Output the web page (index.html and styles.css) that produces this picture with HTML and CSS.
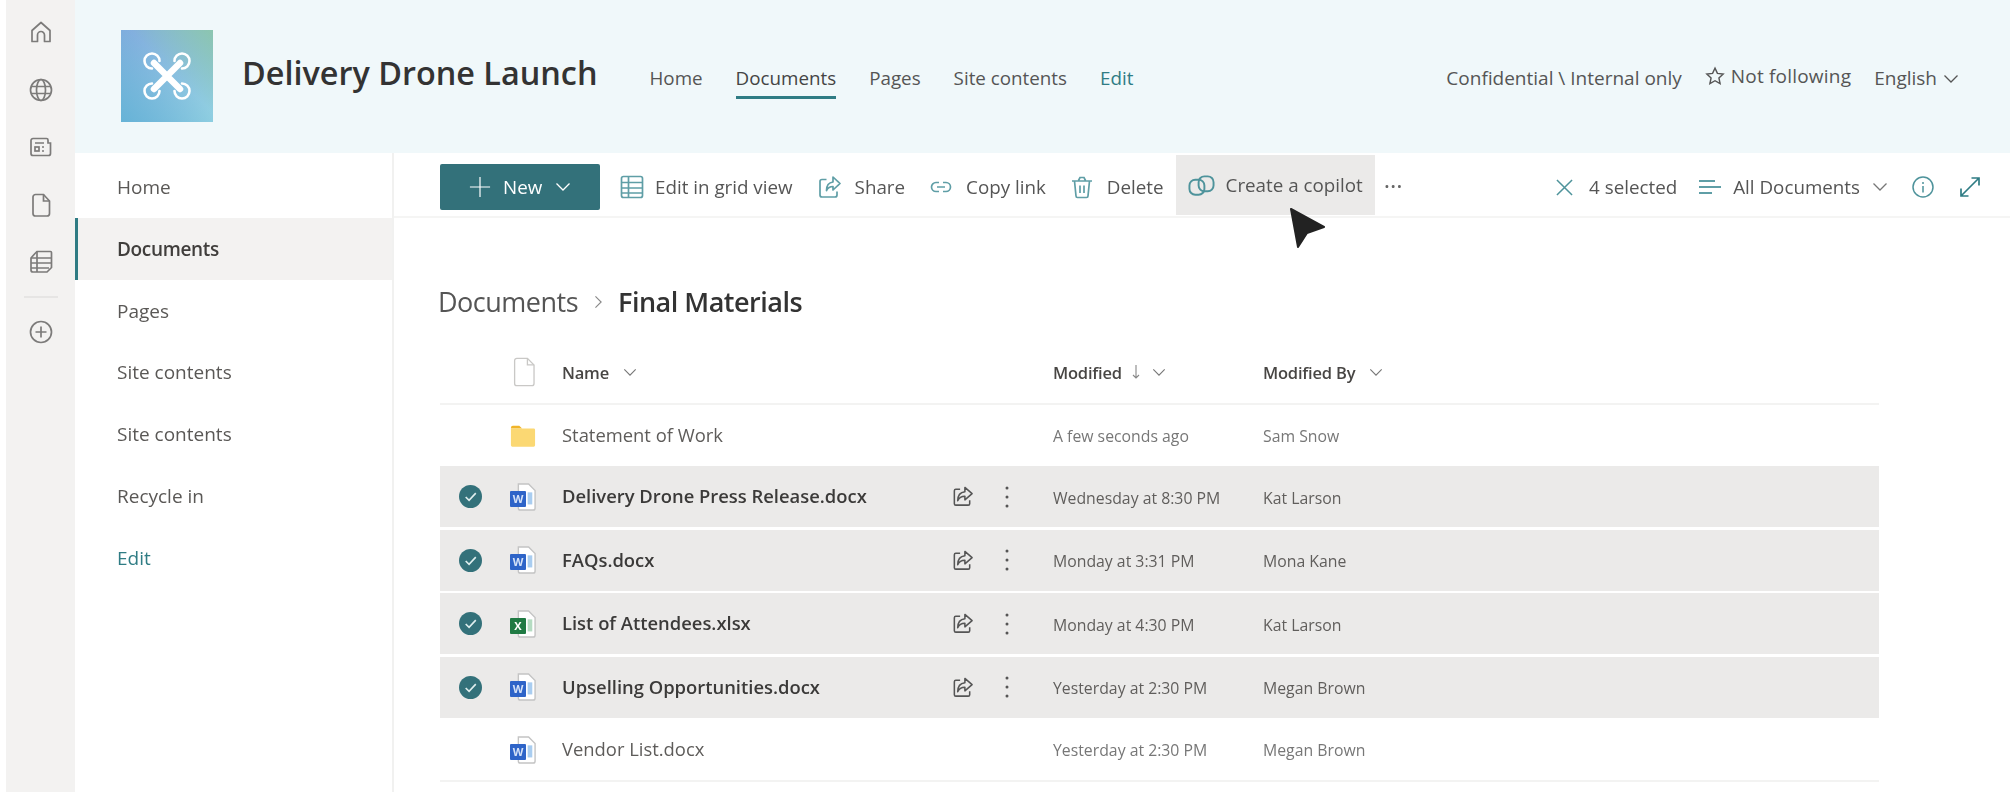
FILE: index.html
```html
<!DOCTYPE html>
<html lang="en">
<head>
<meta charset="utf-8">
<title>Delivery Drone Launch</title>
<link rel="stylesheet" href="styles.css">
</head>
<body>
<svg class="sprite" width="0" height="0" aria-hidden="true">
  <symbol id="chev" viewBox="0 0 16 10"><path d="M1.500 1.500 8 8l6.500-6.500" fill="none" stroke="currentColor" stroke-width="1.300"/></symbol>
  <symbol id="share" viewBox="0 0 24 24"><path d="M9.500 4.500H5a1.500 1.500 0 0 0-1.500 1.500v13.500A1.500 1.500 0 0 0 5 21h13a1.500 1.500 0 0 0 1.500-1.500V16" fill="none" stroke="currentColor" stroke-width="1.600"/><path d="M14.500 2.500 22 9l-7.500 6.500v-3.700c-3.500 0-6 1.200-7.500 4.700 0-5.500 2.500-9 7.500-9.500z" fill="none" stroke="currentColor" stroke-width="1.600" stroke-linejoin="round"/></symbol>
  <symbol id="kebab" viewBox="0 0 6 24"><circle cx="3" cy="3" r="1.500" fill="currentColor"/><circle cx="3" cy="12" r="1.500" fill="currentColor"/><circle cx="3" cy="21" r="1.500" fill="currentColor"/></symbol>
  <symbol id="check" viewBox="0 0 24 24"><circle cx="12" cy="12" r="12" fill="#33717a"/><path d="M7 12.500l3.500 3.500L17.500 8.500" fill="none" stroke="#dfeeee" stroke-width="1.700"/></symbol>
  <symbol id="doc" viewBox="0 0 28 34"><path d="M7 1.500h12l7.500 7.500v21a2.500 2.500 0 0 1-2.500 2.500H7A2.500 2.500 0 0 1 4.500 30V4A2.500 2.500 0 0 1 7 1.500z" fill="#fff" stroke="#c9c8c6" stroke-width="1.500"/><path d="M19 1.500V9h7.500" fill="none" stroke="#c9c8c6" stroke-width="1.500"/></symbol>
  <symbol id="page-w" viewBox="0 0 28 30"><path d="M9 1h11l7 7v19a2 2 0 0 1-2 2H11a2 2 0 0 1-2-2z" fill="#fff" stroke="#c4c4c4" stroke-width="1.500"/><rect x="19" y="10" width="5" height="13" fill="#a9cdf0"/></symbol>
  <symbol id="page-x" viewBox="0 0 28 30"><path d="M9 1h11l7 7v19a2 2 0 0 1-2 2H11a2 2 0 0 1-2-2z" fill="#fff" stroke="#c4c4c4" stroke-width="1.500"/><rect x="19" y="10" width="5" height="13" fill="#b5dcc2"/></symbol>
</svg>

<div class="app">
  <aside class="rail">
    <svg class="rail-icon" viewBox="0 0 24 24"><path d="M3 21.500V10.500L12 2.500l9 8v11h-5.500v-6.500a3.500 3.500 0 0 0-7 0v6.500z" stroke-linejoin="round"/></svg>
    <svg class="rail-icon" viewBox="0 0 24 24"><circle cx="12" cy="12" r="10.500"/><ellipse cx="12" cy="12" rx="4.500" ry="10.500"/><path d="M2 8.500h20M2 15.500h20"/></svg>
    <svg class="rail-icon" viewBox="0 0 24 24"><path d="M4 3.500h13.500c1 0 1.500.5 1.500 1.500v3h2.500v10.500a2 2 0 0 1-2 2H4a2 2 0 0 1-2-2V5.500a2 2 0 0 1 2-2z"/><path d="M6 8h9M13 12h2M13 16h2"/><rect x="6" y="12" width="4" height="4"/></svg>
    <svg class="rail-icon" viewBox="0 0 24 24"><path d="M6.500 1.500h8l6 6.500v12.500a2.500 2.500 0 0 1-2.500 2.500H6.500A2.500 2.500 0 0 1 4 20.500v-16.500a2.500 2.500 0 0 1 2.500-2.500z"/><path d="M14.500 1.500V8h6"/></svg>
    <svg class="rail-icon" viewBox="0 0 24 24"><path d="M6 3.500 8 1.500h13.500a1 1 0 0 1 1 1v15L18 22H4a2 2 0 0 1-2-2V8z"/><path d="M2 8h20M2 13h20M2 18h18M8 8v14M8 1.500V8"/></svg>
    <div class="rail-sep"></div>
    <svg class="rail-icon" viewBox="0 0 24 24"><circle cx="12" cy="12" r="10.500"/><path d="M12 6.500v11M6.500 12h11"/></svg>
  </aside>

  <div class="main">
    <header class="site-header">
      <div class="logo">
        <svg class="logo-mark" viewBox="0 0 48 48"><path d="M11 11 37 37M37 11 11 37" stroke-width="6.500"/><path d="M9 16.500a7.500 7.500 0 1 1 7.500-7.500M39 16.500a7.500 7.500 0 1 0-7.500-7.500M9 31.500a7.500 7.500 0 1 0 7.500 7.500M39 31.500a7.500 7.500 0 1 1-7.500 7.500" stroke-width="2.600"/></svg>
      </div>
      <h1 class="site-title">Delivery Drone Launch</h1>
      <nav class="top-nav">
        <a class="top-link">Home</a>
        <a class="top-link top-active">Documents</a>
        <a class="top-link">Pages</a>
        <a class="top-link">Site contents</a>
        <a class="top-link teal">Edit</a>
      </nav>
      <div class="header-right">
        <span>Confidential \ Internal only</span>
        <span class="follow"><svg class="star" viewBox="0 0 24 24"><path d="M12 2.500l2.900 6.300 6.900.8-5.100 4.700 1.400 6.800-6.100-3.400-6.100 3.400 1.400-6.800L2.200 9.600l6.900-.8z"/></svg>Not following</span>
        <span class="lang">English<svg class="chev-sm" viewBox="0 0 16 10"><use href="#chev"/></svg></span>
      </div>
    </header>

    <div class="below">
      <nav class="side-nav">
        <a class="side-link">Home</a>
        <a class="side-link side-active">Documents</a>
        <a class="side-link">Pages</a>
        <a class="side-link">Site contents</a>
        <a class="side-link">Site contents</a>
        <a class="side-link">Recycle in</a>
        <a class="side-link teal">Edit</a>
      </nav>

      <main class="content">
        <div class="toolbar">
          <button class="new-btn"><svg class="plus" viewBox="0 0 24 24"><path d="M12 1v22M1 12h22"/></svg><span>New</span><svg class="chev-new" viewBox="0 0 16 10"><use href="#chev"/></svg></button>
          <div class="tool tool-first"><svg class="tool-icon" viewBox="0 0 24 24"><rect x="1.500" y="1.500" width="21" height="21" rx="2"/><path d="M1.500 7.500h21M1.500 13h21M1.500 18h21M8.500 1.500v21"/></svg><span>Edit in grid view</span></div>
          <div class="tool"><svg class="tool-icon" viewBox="0 0 24 24"><path d="M8.500 4.500H4a2 2 0 0 0-2 2V20a2 2 0 0 0 2 2h13a2 2 0 0 0 2-2v-3.500"/><path d="M15 2l7 6.500-7 6.500v-3.500c-3 0-5 1-6.500 4 0-5 2.500-8 6.500-8.500z" stroke-linejoin="round"/></svg><span>Share</span></div>
          <div class="tool"><svg class="tool-icon" viewBox="0 0 24 24"><path d="M10 7.500H7a4.500 4.500 0 0 0 0 9h3M14 7.500h3a4.500 4.500 0 0 1 0 9h-3M8 12h8"/></svg><span>Copy link</span></div>
          <div class="tool"><svg class="tool-icon" viewBox="0 0 24 24"><path d="M2 6h20M8.500 5.500 10 2.500h4l1.500 3M4.500 6l1.500 15a1.500 1.500 0 0 0 1.500 1.500h9a1.500 1.500 0 0 0 1.500-1.500L19.500 6M10 10.500v7.500M14 10.500v7.500"/></svg><span>Delete</span></div>
          <div class="tool tool-hover"><svg class="tool-icon copilot" viewBox="0 0 28 28"><rect x="1.500" y="8" width="15.500" height="15.500" rx="6"/><rect x="11" y="4.500" width="15.500" height="15.500" rx="6"/></svg><span>Create a copilot</span></div>
          <div class="more-h">&middot;&middot;&middot;</div>
          <div class="tool-right">
            <svg class="x-icon" viewBox="0 0 18 18"><path d="M1 1l16 16M17 1 1 17"/></svg>
            <span class="sel">4 selected</span>
            <svg class="lines" viewBox="0 0 22 16"><path d="M0 2h16M0 8h22M0 14h13"/></svg>
            <span class="views">All Documents</span>
            <svg class="chev-view" viewBox="0 0 16 10"><use href="#chev"/></svg>
            <svg class="info" viewBox="0 0 22 22"><circle cx="11" cy="11" r="10"/><path d="M11 10v6.500M11 6v2"/></svg>
            <svg class="expand" viewBox="0 0 22 22"><path d="M2 20 20 2M12.500 2H20v7.500M2 12.500V20h7.500"/></svg>
          </div>
        </div>

        <div class="crumbs"><span class="crumb">Documents</span><svg class="crumb-sep" viewBox="0 0 10 16"><path d="M1.500 1.500 8 8l-6.500 6.500"/></svg><strong class="crumb-now">Final Materials</strong></div>

        <section class="list">
          <div class="row row-head">
            <span></span>
            <span class="c-icon"><svg class="ic-head" viewBox="0 0 28 34"><use href="#doc"/></svg></span>
            <span class="h-cell">Name<svg class="chev-head" viewBox="0 0 16 10"><use href="#chev"/></svg></span>
            <span></span><span></span>
            <span class="c-mod h-cell">Modified<svg class="down" viewBox="0 0 8 16"><path d="M4 1v13M1 11l3 3 3-3"/></svg><svg class="chev-head chev-tight" viewBox="0 0 16 10"><use href="#chev"/></svg></span>
            <span class="h-cell">Modified By<svg class="chev-head" viewBox="0 0 16 10"><use href="#chev"/></svg></span>
          </div>

          <div class="row row-plain row-first">
            <span></span>
            <span class="c-icon"><svg class="ic-file" viewBox="0 0 28 24"><path d="M1 3a2 2 0 0 1 2-2h7l3 3h-12z" fill="#f0b429"/><path d="M1 4h25a1.500 1.500 0 0 1 1 1.500V22a1.500 1.500 0 0 1-1.500 1.500h-23A1.500 1.500 0 0 1 1 22z" fill="#fbd873"/></svg></span>
            <span class="fname">Statement of Work</span>
            <span></span><span></span>
            <span class="c-mod meta">A few seconds ago</span>
            <span class="meta">Sam Snow</span>
          </div>

          <div class="row row-sel">
            <span class="c-check"><svg class="ic-check" viewBox="0 0 24 24"><use href="#check"/></svg></span>
            <span class="c-icon"><span class="file-ic"><svg class="ic-file" viewBox="0 0 28 30"><use href="#page-w"/></svg><b class="badge badge-w">W</b></span></span>
            <span class="fname">Delivery Drone Press Release.docx</span>
            <span class="c-act"><svg class="ic-share" viewBox="0 0 24 24"><use href="#share"/></svg></span>
            <span class="c-act"><svg class="ic-kebab" viewBox="0 0 6 24"><use href="#kebab"/></svg></span>
            <span class="c-mod meta">Wednesday at 8:30 PM</span>
            <span class="meta">Kat Larson</span>
          </div>

          <div class="row row-sel">
            <span class="c-check"><svg class="ic-check" viewBox="0 0 24 24"><use href="#check"/></svg></span>
            <span class="c-icon"><span class="file-ic"><svg class="ic-file" viewBox="0 0 28 30"><use href="#page-w"/></svg><b class="badge badge-w">W</b></span></span>
            <span class="fname">FAQs.docx</span>
            <span class="c-act"><svg class="ic-share" viewBox="0 0 24 24"><use href="#share"/></svg></span>
            <span class="c-act"><svg class="ic-kebab" viewBox="0 0 6 24"><use href="#kebab"/></svg></span>
            <span class="c-mod meta">Monday at 3:31 PM</span>
            <span class="meta">Mona Kane</span>
          </div>

          <div class="row row-sel">
            <span class="c-check"><svg class="ic-check" viewBox="0 0 24 24"><use href="#check"/></svg></span>
            <span class="c-icon"><span class="file-ic"><svg class="ic-file" viewBox="0 0 28 30"><use href="#page-x"/></svg><b class="badge badge-x">X</b></span></span>
            <span class="fname">List of Attendees.xlsx</span>
            <span class="c-act"><svg class="ic-share" viewBox="0 0 24 24"><use href="#share"/></svg></span>
            <span class="c-act"><svg class="ic-kebab" viewBox="0 0 6 24"><use href="#kebab"/></svg></span>
            <span class="c-mod meta">Monday at 4:30 PM</span>
            <span class="meta">Kat Larson</span>
          </div>

          <div class="row row-sel row-sel-last">
            <span class="c-check"><svg class="ic-check" viewBox="0 0 24 24"><use href="#check"/></svg></span>
            <span class="c-icon"><span class="file-ic"><svg class="ic-file" viewBox="0 0 28 30"><use href="#page-w"/></svg><b class="badge badge-w">W</b></span></span>
            <span class="fname">Upselling Opportunities.docx</span>
            <span class="c-act"><svg class="ic-share" viewBox="0 0 24 24"><use href="#share"/></svg></span>
            <span class="c-act"><svg class="ic-kebab" viewBox="0 0 6 24"><use href="#kebab"/></svg></span>
            <span class="c-mod meta">Yesterday at 2:30 PM</span>
            <span class="meta">Megan Brown</span>
          </div>

          <div class="row row-plain row-end">
            <span></span>
            <span class="c-icon"><span class="file-ic"><svg class="ic-file" viewBox="0 0 28 30"><use href="#page-w"/></svg><b class="badge badge-w">W</b></span></span>
            <span class="fname">Vendor List.docx</span>
            <span></span><span></span>
            <span class="c-mod meta">Yesterday at 2:30 PM</span>
            <span class="meta">Megan Brown</span>
          </div>
        </section>
      </main>
    </div>
  </div>
</div>

<div class="glow"></div>
<svg class="cursor" viewBox="0 0 40 40"><path d="M3 1 36 19 19 25 10 39z" fill="#222" stroke="#222" stroke-width="2" stroke-linejoin="round"/></svg>
</body>
</html>
```
FILE: styles.css
```css
* { box-sizing: border-box; }
html, body { margin: 0; height: 792px; overflow: hidden; background: #fff; }
body { font-family: "Open Sans", "Noto Sans", "Liberation Sans", sans-serif; color: #484644; }
.sprite { position: absolute; }

.app { display: flex; height: 792px; padding-left: 6px; filter: blur(.45px); }

/* Rail */
.rail { width: 69px; background: #f3f2f1; display: flex; flex-direction: column; align-items: center; padding: 20px 0 0; flex: none; }
.rail-icon { width: 24px; height: 24px; fill: none; stroke: #7c7b7a; stroke-width: 1.700; margin-bottom: 33.500px; flex: none; }
.rail-sep { width: 34px; height: 2px; background: #e6e5e4; margin: -11.500px 0 21.500px; flex: none; }

.main { flex: 1; display: flex; flex-direction: column; min-width: 0; }

/* Header */
.site-header { height: 153px; background: #f0f8fa; display: flex; align-items: center; padding: 0 51px 0 46px; flex: none; }
.logo { width: 92px; height: 92px; margin-top: -1px; display: flex; align-items: center; justify-content: center; flex: none;
  background: linear-gradient(45deg, rgba(100,178,214,.95), rgba(135,190,222,.35) 55%, rgba(140,198,170,.9)), linear-gradient(135deg, #7ea3de, #96dae3); }
.logo-mark { width: 48px; height: 48px; fill: none; stroke: #fff; stroke-linecap: round; }
.site-title { font-size: 32.400px; font-weight: 600; margin: -10px 0 0 29px; color: #333; white-space: nowrap; }
.top-nav { display: flex; gap: 33px; margin-left: 52px; margin-top: 4px; font-size: 18.800px; color: #555; }
.top-link { height: 40px; line-height: 38px; white-space: nowrap; border-bottom: 3px solid transparent; }
.top-active { border-bottom-color: #2f7c84; color: #444; }
.teal { color: #2f7c84; }
.header-right { margin-left: auto; display: flex; align-items: center; gap: 23px; font-size: 19px; color: #555; margin-top: 2px; white-space: nowrap; }
.follow { display: inline-flex; align-items: center; gap: 6px; margin-top: -3px; letter-spacing: .2px; }
.star { width: 20px; height: 20px; fill: none; stroke: #555; stroke-width: 1.700; }
.lang { display: inline-flex; align-items: center; gap: 6px; }
.chev-sm { width: 16px; height: 10px; color: #555; margin-top: 3px; }

/* Below header */
.below { flex: 1; display: flex; min-height: 0; }
.side-nav { width: 319px; border-right: 2px solid #f1f1f0; display: flex; flex-direction: column; padding-top: 3px; flex: none; }
.side-link { height: 62px; line-height: 62px; padding-left: 42px; font-size: 19px; color: #5a5856; flex: none; margin-bottom: -.2px; }
.side-link.teal { color: #2f7c84; }
.side-active { background: #f3f2f1; border-left: 3px solid #2f7c84; padding-left: 39px; font-weight: 600; letter-spacing: -.35px; color: #403e3c; }

.content { flex: 1; min-width: 0; }

/* Toolbar */
.toolbar { height: 65px; border-bottom: 2px solid #f5f5f4; display: flex; align-items: center; padding: 5px 29px 0 46px; }
.new-btn { width: 160px; height: 46px; border: 0; border-radius: 2px; background: #33717a; color: #fff; display: flex; align-items: center; font: 400 18.800px "Open Sans", sans-serif; padding: 0 0 0 29px; margin: 0 8px 0 0; flex: none; }
.plus { width: 22px; height: 22px; fill: none; stroke: #fff; stroke-width: 1.300; margin-right: 12px; }
.chev-new { width: 16px; height: 10px; color: #fff; margin-left: 13px; }
.tool { display: flex; align-items: center; gap: 13px; padding: 0 12px; height: 60px; font-size: 18.800px; color: #555; white-space: nowrap; flex: none; }
.tool-first { gap: 11px; padding-right: 13px; }
.tool-icon { width: 24px; height: 24px; fill: none; stroke: #5f9ea6; stroke-width: 1.700; flex: none; }
.tool-hover { background: #ebeae9; margin-top: -4px; gap: 11px; }
.copilot { width: 27px; height: 27px; stroke: #4e939b; stroke-width: 2; }
.more-h { font-size: 24px; color: #666; margin-left: 9px; margin-top: -3px; }
.tool-right { margin-left: auto; display: flex; align-items: center; font-size: 18.800px; color: #555; white-space: nowrap; }
.x-icon { width: 17px; height: 17px; fill: none; stroke: #4e939b; stroke-width: 1.600; margin-right: 16px; }
.lines { width: 22px; height: 16px; fill: none; stroke: #5f9ea6; stroke-width: 1.800; margin: 0 12px 0 22px; }
.chev-view { width: 16px; height: 10px; color: #777; margin: 0 24px 0 12px; }
.info { width: 22px; height: 22px; fill: none; stroke: #4e939b; stroke-width: 1.500; margin-right: 25px; }
.expand { width: 22px; height: 22px; fill: none; stroke: #2f7c84; stroke-width: 1.700; }

/* Breadcrumb */
.crumbs { display: flex; align-items: center; height: 44px; margin: 61px 0 0 44px; }
.crumb { font-size: 27px; letter-spacing: -.5px; color: #555; }
.crumb-sep { width: 9px; height: 14px; fill: none; stroke: #888; stroke-width: 1.300; margin: 2px 15px 0 16px; }
.crumb-now { font-size: 27px; font-weight: 600; letter-spacing: -.5px; color: #333; }

/* List */
.list { width: 1439px; margin: 21px 0 0 46px; }
.row { display: grid; grid-template-columns: 60px 62px 380px 40px 50px 231px 1fr; align-items: center; }
.row-head { height: 61px; border-bottom: 2px solid #f3f3f2; padding-bottom: 3px; font-size: 16.500px; font-weight: 600; letter-spacing: -.2px; color: #484644; }
.h-cell { display: flex; align-items: center; white-space: nowrap; }
.chev-head { width: 14px; height: 9px; color: #777; margin-left: 14px; }
.chev-tight { margin-left: 12px; }
.down { width: 8px; height: 16px; fill: none; stroke: #888; stroke-width: 1.100; margin-left: 10px; }
.c-icon { display: flex; padding-left: 10px; align-items: center; }
.ic-head { width: 26px; height: 30px; }
.ic-file { width: 26px; height: 28px; display: block; }
.file-ic { position: relative; display: block; width: 26px; height: 28px; }
.badge { position: absolute; left: 0; top: 8px; width: 16px; height: 16px; border-radius: 1px; color: #d5e2f7; font: 700 11px/16px "Open Sans", sans-serif; text-align: center; }
.badge-w { background: #2e64c8; }
.badge-x { background: #1f7a43; color: #fff; }
.c-check { display: flex; justify-content: center; }
.ic-check { width: 23px; height: 23px; }
.c-act { display: flex; justify-content: center; color: #555; }
.ic-share { width: 23px; height: 23px; }
.ic-kebab { width: 6px; height: 24px; }
.c-mod { padding-left: 21px; }
.fname { font-size: 18.400px; white-space: nowrap; color: #5e5c5a; margin-top: -2px; }
.meta { font-size: 15.800px; color: #777; white-space: nowrap; margin-top: 1px; }
.row-plain { height: 61px; }
.row-sel { height: 61px; margin-bottom: 2.670px; background: #ebeae9; }
.row-sel .fname { font-weight: 600; color: #3b3a39; }
.row-sel .meta { color: #605e5c; margin-top: 2px; }
.row-sel-last { margin-bottom: 0; }
.row-end { height: 64px; padding-top: 2px; border-bottom: 2px solid #f3f3f2; }

/* Pointer overlay */
.glow { position: absolute; left: 1232px; top: 225px; width: 130px; height: 130px; border-radius: 50%; background: radial-gradient(circle, #f9f9f9 0, #fcfcfc 60%, rgba(255,255,255,0) 100%); pointer-events: none; z-index: -1; }
.cursor { position: absolute; left: 1288px; top: 208px; width: 40px; height: 40px; }
```
